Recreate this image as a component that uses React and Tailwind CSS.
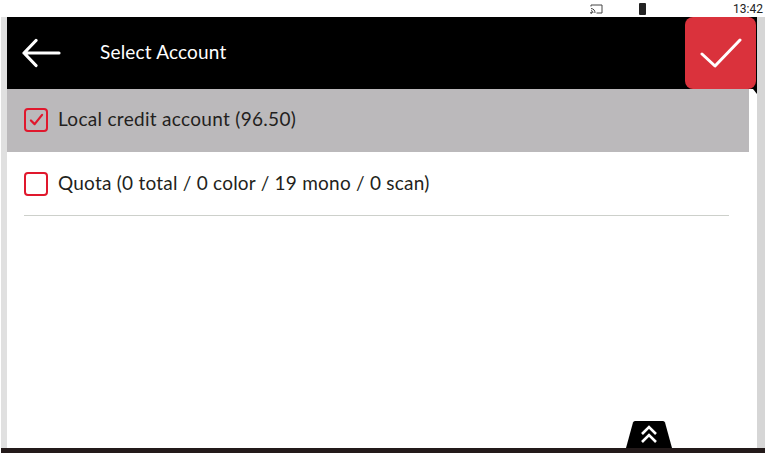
import React from "react";

function Box({ checked }) {
  return (
    <span className="w-6 h-6 shrink-0 rounded-[4px] border-[2.5px] border-[#e0182d] flex items-center justify-center">
      {checked && (
        <svg width="15" height="13" viewBox="0 0 16 14" fill="none" stroke="#e0182d" strokeWidth="2.4" strokeLinecap="round" strokeLinejoin="round">
          <path d="M2 8l4 4 8-10" />
        </svg>
      )}
    </span>
  );
}

export default function App() {
  return (
    <div className="w-[767px] h-[454px] bg-white flex flex-col overflow-hidden font-['Lato',sans-serif] text-[#231f20]">
      {/* Status bar */}
      <div className="h-[17px] shrink-0 flex items-center text-[#222]">
        <svg className="ml-[590px]" width="13" height="10" viewBox="0 0 13 10" fill="none" stroke="#444" strokeWidth="1">
          <path d="M1 2.5V1h11v8H6.5" />
          <path d="M1 4.5A4.5 4.5 0 0 1 5 9M1 6.5A2.5 2.5 0 0 1 3 9" />
          <circle cx="1.2" cy="8.8" r="0.6" fill="#444" />
        </svg>
        <span className="ml-[36px] w-[7px] h-[12px] bg-[#222] rounded-[1px]" />
        <span className="ml-auto mr-[4px] text-[12px] leading-none font-['Roboto',sans-serif]">13:42</span>
      </div>

      {/* Main area */}
      <div className="relative flex-1 min-h-0 ml-[1px] mr-[2px] flex bg-white">
        <div className="w-[6px] shrink-0 bg-[#e0e0e0]" />
        <div className="relative flex-1 min-w-0 flex flex-col">
          <header className="h-[72px] shrink-0 bg-black flex items-center text-white">
            <svg className="ml-[15px]" width="40" height="30" viewBox="0 0 40 30" fill="none" stroke="white" strokeWidth="3.2" strokeLinecap="round" strokeLinejoin="round">
              <path d="M2 15h35M14 2.5L2 15l12 12.5" />
            </svg>
            <h1 className="ml-[38px] pb-[4px] text-[19px] leading-none font-normal tracking-[0.18px]">Select Account</h1>
            <button className="ml-auto mr-[1px] w-[71px] h-[72px] bg-[#da323c] rounded-[8px] flex items-center justify-center">
              <svg width="42" height="32" viewBox="0 0 42 32" fill="none" stroke="white" strokeWidth="3" strokeLinecap="round" strokeLinejoin="round">
                <path d="M2 17l13 12L40 3" />
              </svg>
            </button>
          </header>
          <div className="flex-1 min-h-0 pr-[8px]">
            <div className="h-[63px] pb-[2px] bg-[#bbb9bb] flex items-center pl-[17px] gap-[10px] text-[19px] tracking-[0.3px]">
              <Box checked />
              <span>Local credit account (96.50)</span>
            </div>
            <div className="ml-[17px] mr-[20px] h-[64px] border-b border-[#cdd0cb] flex items-center gap-[10px] text-[19px] tracking-[0.23px]">
              <Box />
              <span>Quota (0 total / 0 color / 19 mono / 0 scan)</span>
            </div>
          </div>
          {/* corner sliver under the confirm button */}
          <svg className="absolute right-0 top-[72px]" width="4" height="5" viewBox="0 0 4 5">
            <path d="M0 0H4V5Z" fill="#000" />
          </svg>
        </div>
        <div className="w-[8px] shrink-0 bg-[#d6d6d6]" />
        {/* Pull-up tab */}
        <div className="absolute left-[625px] bottom-0 w-[46px] h-[27px]">
          <svg className="absolute inset-0" width="46" height="27" viewBox="0 0 46 27">
            <path d="M0 27L7 1.5Q7.5 0 9 0H37Q38.5 0 39 1.5L46 27Z" fill="#000" />
            <path d="M16 13l7-7 7 7M16 21l7-7 7 7" fill="none" stroke="white" strokeWidth="2.6" />
          </svg>
        </div>
      </div>

      {/* Bottom bar */}
      <div className="h-[5px] shrink-0 ml-[1px] mr-[2px] bg-[#231a1a]" />
      <div className="h-[1px] shrink-0" />
    </div>
  );
}
